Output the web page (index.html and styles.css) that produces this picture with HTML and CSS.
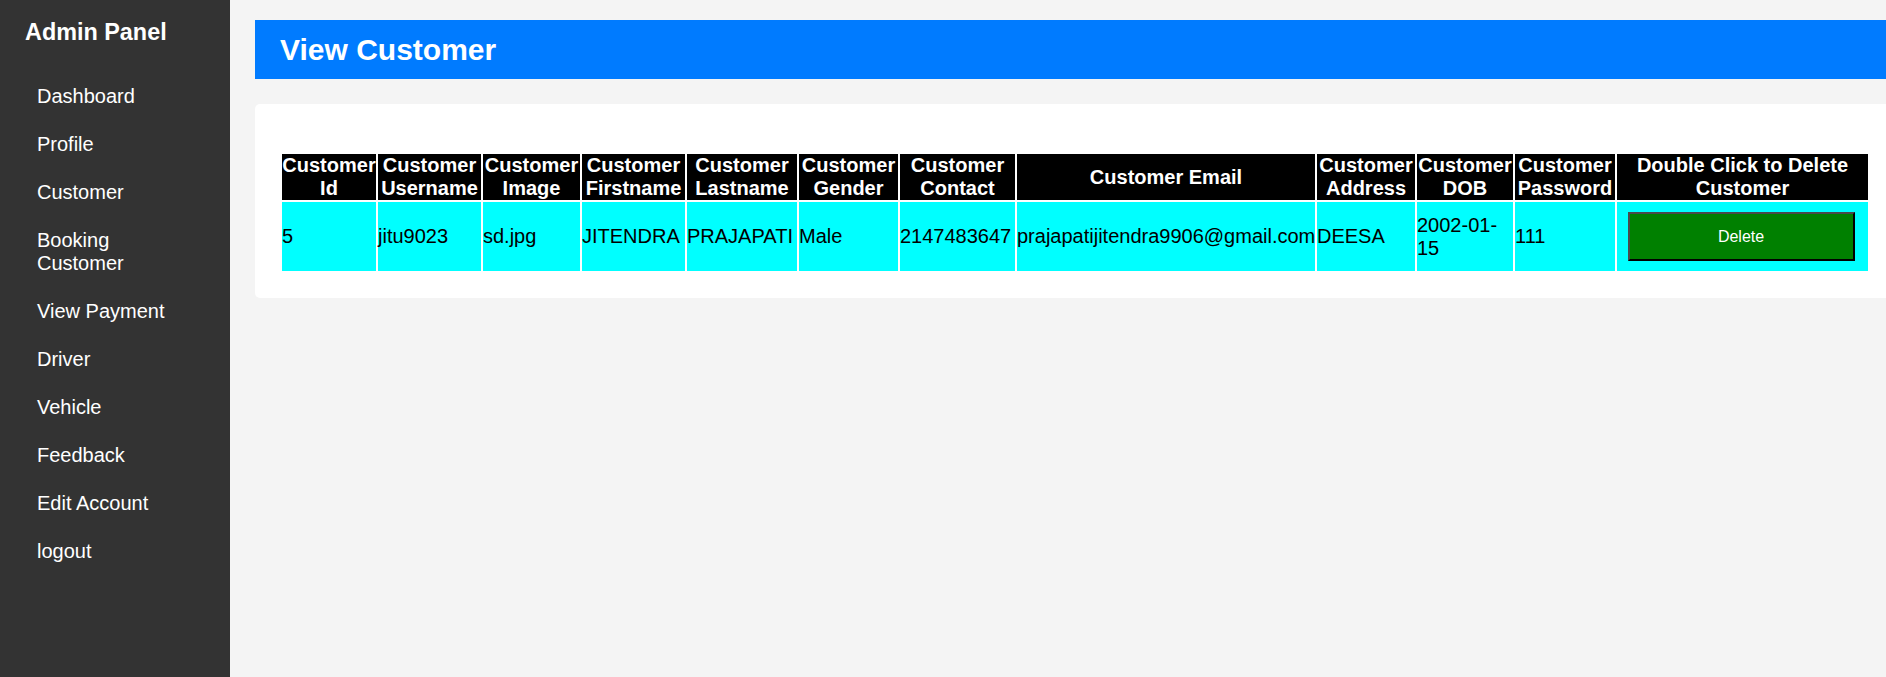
FILE: index.html
```html
<!DOCTYPE html>
<html lang="en">
<head>
<meta charset="utf-8">
<title>View Customer</title>
<link rel="stylesheet" href="styles.css">
</head>
<body>
<div class="layout">
  <aside class="sidebar">
    <h3 class="brand">Admin Panel</h3>
    <ul class="nav">
      <li><a href="#">Dashboard</a></li>
      <li><a href="#">Profile</a></li>
      <li><a href="#">Customer</a></li>
      <li><a href="#">Booking Customer</a></li>
      <li><a href="#">View Payment</a></li>
      <li><a href="#">Driver</a></li>
      <li><a href="#">Vehicle</a></li>
      <li><a href="#">Feedback</a></li>
      <li><a href="#">Edit Account</a></li>
      <li><a href="#">logout</a></li>
    </ul>
  </aside>
  <main class="main">
    <h2 class="page-title">View Customer</h2>
    <section class="card">
      <table class="grid">
        <colgroup>
          <col class="c1"><col class="c2"><col class="c3"><col class="c4">
          <col class="c5"><col class="c6"><col class="c7"><col class="c8">
          <col class="c9"><col class="c10"><col class="c11"><col class="c12">
        </colgroup>
        <thead>
          <tr>
            <th>Customer Id</th>
            <th>Customer Username</th>
            <th>Customer Image</th>
            <th>Customer Firstname</th>
            <th>Customer Lastname</th>
            <th>Customer Gender</th>
            <th>Customer Contact</th>
            <th>Customer Email</th>
            <th>Customer Address</th>
            <th>Customer DOB</th>
            <th>Customer Password</th>
            <th>Double Click to Delete Customer</th>
          </tr>
        </thead>
        <tbody>
          <tr>
            <td>5</td>
            <td>jitu9023</td>
            <td>sd.jpg</td>
            <td>JITENDRA</td>
            <td>PRAJAPATI</td>
            <td>Male</td>
            <td>2147483647</td>
            <td>prajapatijitendra9906@gmail.com</td>
            <td>DEESA</td>
            <td>2002-01-15</td>
            <td>111</td>
            <td><button class="delete-btn" type="button">Delete</button></td>
          </tr>
        </tbody>
      </table>
    </section>
  </main>
</div>
</body>
</html>
```
FILE: styles.css
```css
html, body {
  margin: 0;
  padding: 0;
  overflow: hidden;
}

body {
  font-family: "Liberation Sans", Arial, sans-serif;
  font-size: 20px;
  background: #f4f4f4;
  color: #000;
}

.layout {
  display: flex;
  min-height: 100vh;
  overflow: hidden;
}

.sidebar {
  flex: 0 0 230px;
  width: 230px;
  background: #333333;
  color: #fff;
  padding-top: 19px;
  box-sizing: border-box;
}

.brand {
  margin: 0 0 26px 25px;
  font-size: 23.4px;
  font-weight: bold;
  line-height: normal;
}

.nav {
  list-style: none;
  margin: 0;
  padding: 0;
}

.nav a {
  display: block;
  padding: 12.5px 36px 12.5px 37px;
  color: #fff;
  text-decoration: none;
  font-size: 20px;
}

.main {
  flex: 0 0 auto;
  width: 1640px;
  padding: 20px 25px;
}

.page-title {
  margin: 0 0 25px;
  padding: 12px 25px;
  background: #007bff;
  color: #fff;
  font-size: 30px;
  font-weight: bold;
  line-height: 35px;
}

.card {
  background: #fff;
  border-radius: 5px;
  padding: 25px;
}

.grid {
  width: 100%;
  margin-top: 23px;
  table-layout: fixed;
  border-spacing: 2px;
  font-size: 20px;
}

.grid th,
.grid td {
  padding: 0;
  line-height: normal;
}

.grid th {
  background: #000;
  color: #fff;
  font-weight: bold;
  text-align: center;
  vertical-align: middle;
}

.grid td {
  background: #00ffff;
  color: #000;
  text-align: left;
  vertical-align: middle;
  white-space: normal;
}

.c1 { width: 94px; }
.c2 { width: 103px; }
.c3 { width: 97px; }
.c4 { width: 103px; }
.c5 { width: 110px; }
.c6 { width: 99px; }
.c7 { width: 115px; }
.c8 { width: 298px; }
.c9 { width: 98px; }
.c10 { width: 96px; }
.c11 { width: 100px; }
.c12 { width: 251px; }

.delete-btn {
  display: block;
  box-sizing: border-box;
  width: 227px;
  height: 49px;
  margin: 10px 0 10px 10.5px;
  padding: 0;
  background: #008000;
  color: #fff;
  font-family: "Liberation Sans", Arial, sans-serif;
  font-size: 16px;
  border-style: solid;
  border-width: 2px;
  border-color: #4a4a4a #000 #000 #4a4a4a;
  cursor: pointer;
}
```
